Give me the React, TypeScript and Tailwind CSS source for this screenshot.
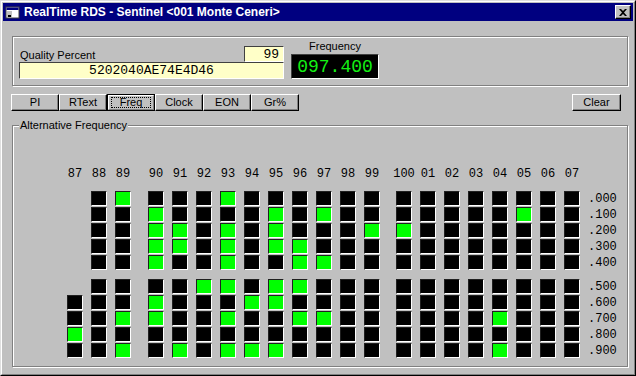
import React from "react";

type Col = { label: string; top: string; bottom: string; ml: string };

const cols: Col[] = [
  { label: "87", top: "-----", bottom: "-0010", ml: "" },
  { label: "88", top: "00000", bottom: "00000", ml: "ml-[8px]" },
  { label: "89", top: "10000", bottom: "00101", ml: "ml-[8px]" },
  { label: "90", top: "01111", bottom: "01100", ml: "ml-[17px]" },
  { label: "91", top: "00110", bottom: "00001", ml: "ml-[8px]" },
  { label: "92", top: "00000", bottom: "10000", ml: "ml-[8px]" },
  { label: "93", top: "10111", bottom: "10101", ml: "ml-[8px]" },
  { label: "94", top: "00000", bottom: "01001", ml: "ml-[8px]" },
  { label: "95", top: "01110", bottom: "11001", ml: "ml-[8px]" },
  { label: "96", top: "00011", bottom: "10100", ml: "ml-[8px]" },
  { label: "97", top: "01001", bottom: "00100", ml: "ml-[8px]" },
  { label: "98", top: "00000", bottom: "00000", ml: "ml-[8px]" },
  { label: "99", top: "00100", bottom: "00000", ml: "ml-[8px]" },
  { label: "100", top: "00100", bottom: "00000", ml: "ml-[16px]" },
  { label: "01", top: "00000", bottom: "00000", ml: "ml-[8px]" },
  { label: "02", top: "00000", bottom: "00000", ml: "ml-[8px]" },
  { label: "03", top: "00000", bottom: "00000", ml: "ml-[8px]" },
  { label: "04", top: "00000", bottom: "00101", ml: "ml-[8px]" },
  { label: "05", top: "01000", bottom: "00000", ml: "ml-[8px]" },
  { label: "06", top: "00000", bottom: "00000", ml: "ml-[8px]" },
  { label: "07", top: "00000", bottom: "00000", ml: "ml-[8px]" },
];

const sans = { fontFamily: '"Liberation Sans", Arial, sans-serif' };
const mono = { fontFamily: '"Liberation Mono", "Courier New", monospace' };

function Cell({ v }: { v: string }) {
  if (v === "-") return <div className="w-[16px] h-[15px]" />;
  return (
    <div
      className={`w-[16px] h-[15px] border border-t-[#202020] border-l-[#202020] border-r-white border-b-white ${
        v === "1" ? "bg-[#00ff00]" : "bg-black"
      }`}
    />
  );
}

function Column({ c }: { c: Col }) {
  return (
    <div className={`w-[16px] shrink-0 flex flex-col ${c.ml}`}>
      <div className="w-[16px] h-[16px] flex justify-center leading-[16px] text-[12px] text-black whitespace-nowrap" style={mono}>
        {c.label}
      </div>
      <div className="mt-[9px] flex flex-col gap-[1px]">
        {c.top.split("").map((v, i) => (
          <Cell key={i} v={v} />
        ))}
      </div>
      <div className="mt-[9px] flex flex-col gap-[1px]">
        {c.bottom.split("").map((v, i) => (
          <Cell key={i} v={v} />
        ))}
      </div>
    </div>
  );
}

function Btn({ label, focused, w = "w-[48px]" }: { label: string; focused?: boolean; w?: string }) {
  if (focused) {
    return (
      <div className={`${w} h-[17px] border border-black`}>
        <div className="w-full h-full border-t border-l border-t-white border-l-white border-r border-b border-r-[#808080] border-b-[#808080] flex items-center justify-center">
          <div className="border border-dotted border-black h-[11px] w-[40px] flex items-center justify-center text-[11px] leading-none text-black" style={sans}>
            {label}
          </div>
        </div>
      </div>
    );
  }
  return (
    <div
      className={`${w} h-[17px] border border-t-white border-l-white border-r-black border-b-black shadow-[inset_-1px_-1px_0_#808080] flex items-center justify-center text-[11px] leading-none text-black`}
      style={sans}
    >
      {label}
    </div>
  );
}

function TitleIcon() {
  return (
    <svg width="16" height="16" viewBox="0 0 16 16">
      <rect x="1" y="3" width="13" height="11" fill="#ffffff" stroke="#404040" strokeWidth="1" />
      <rect x="1.5" y="3.5" width="12" height="2.5" fill="#000080" />
      <rect x="2" y="7" width="5" height="6" fill="#c0c0c0" />
      <rect x="3" y="11" width="3" height="2" fill="#000000" />
    </svg>
  );
}

export default function App() {
  const rightLabelsTop = [".000", ".100", ".200", ".300", ".400"];
  const rightLabelsBottom = [".500", ".600", ".700", ".800", ".900"];
  return (
    <div className="w-[636px] h-[376px] bg-[#c0c0c0] border border-t-[#dfdfdf] border-l-[#dfdfdf] border-r-black border-b-black overflow-hidden">
      <div className="w-full h-full border border-t-white border-l-white border-r-[#808080] border-b-[#808080] p-[1px] flex flex-col">
        {/* Title bar */}
        <div className="h-[18px] bg-[#000080] flex items-center pl-[2px] pr-[2px] shrink-0">
          <TitleIcon />
          <div className="ml-[3px] text-white font-bold text-[12px] leading-none whitespace-nowrap" style={sans}>
            RealTime RDS - Sentinel &lt;001 Monte Ceneri&gt;
          </div>
          <div className="ml-auto w-[16px] h-[14px] bg-[#c0c0c0] border border-t-white border-l-white border-r-black border-b-black shadow-[inset_-1px_-1px_0_#808080] flex items-center justify-center">
            <svg width="8" height="7" viewBox="0 0 8 7">
              <path d="M0 0 L2 0 L4 2 L6 0 L8 0 L5 3.5 L8 7 L6 7 L4 5 L2 7 L0 7 L3 3.5 Z" fill="black" />
            </svg>
          </div>
        </div>

        {/* Top group */}
        <div className="ml-[9px] mt-[15px] w-[616px] h-[50px] border border-[#808080] shadow-[inset_1px_1px_0_#fff,1px_1px_0_#fff] flex">
          <div className="ml-[6px] mt-[9px] w-[265px] flex flex-col">
            <div className="flex items-end justify-between h-[16px]">
              <div className="text-[11px] leading-[13px] text-black ml-[1px]" style={sans}>
                Quality Percent
              </div>
              <div className="w-[40px] h-[16px] bg-[#ffffc8] border border-t-[#404040] border-l-[#404040] border-r-white border-b-white flex items-center justify-end pr-[4px] text-[13px] leading-none text-black" style={mono}>
                99
              </div>
            </div>
            <div className="w-full h-[17px] bg-[#ffffc8] border border-t-[#404040] border-l-[#404040] border-r-white border-b-white flex items-center justify-center text-[13px] leading-none text-black" style={mono}>
              5202040AE74E4D46
            </div>
          </div>
          <div className="ml-[7px] pt-[2px] w-[88px] flex flex-col">
            <div className="h-[15px] text-center text-[11px] leading-[14px] text-black" style={sans}>
              Frequency
            </div>
            <div className="h-[25px] bg-black border border-t-[#404040] border-l-[#404040] border-r-white border-b-white flex items-center justify-center text-[18px] leading-none text-[#14f014]" style={mono}>
              097.400
            </div>
          </div>
        </div>

        {/* Buttons row */}
        <div className="mt-[8px] ml-[8px] mr-[12px] flex items-start">
          <Btn label="PI" />
          <Btn label="RText" />
          <Btn label="Freq" focused />
          <Btn label="Clock" />
          <Btn label="EON" />
          <Btn label="Gr%" />
          <div className="ml-auto">
            <Btn label="Clear" w="w-[49px]" />
          </div>
        </div>

        {/* Alternative Frequency group */}
        <div className="relative ml-[9px] mt-[14px] w-[616px] h-[242px] border border-[#808080] shadow-[inset_1px_1px_0_#fff,1px_1px_0_#fff]">
          <div className="absolute left-[6px] top-[-8px] px-[1px] bg-[#c0c0c0] text-[11px] leading-[14px] text-black whitespace-nowrap" style={sans}>
            Alternative Frequency
          </div>
          <div className="pt-[40px] pl-[54px] flex">
            {cols.map((c) => (
              <Column key={c.label} c={c} />
            ))}
            <div className="ml-[8px] flex flex-col">
              <div className="mt-[25px] flex flex-col">
                {rightLabelsTop.map((l) => (
                  <div key={l} className="h-[16px] leading-[16px] text-[12px] text-black" style={mono}>
                    {l}
                  </div>
                ))}
              </div>
              <div className="mt-[8px] flex flex-col">
                {rightLabelsBottom.map((l) => (
                  <div key={l} className="h-[16px] leading-[16px] text-[12px] text-black" style={mono}>
                    {l}
                  </div>
                ))}
              </div>
            </div>
          </div>
        </div>
      </div>
    </div>
  );
}
